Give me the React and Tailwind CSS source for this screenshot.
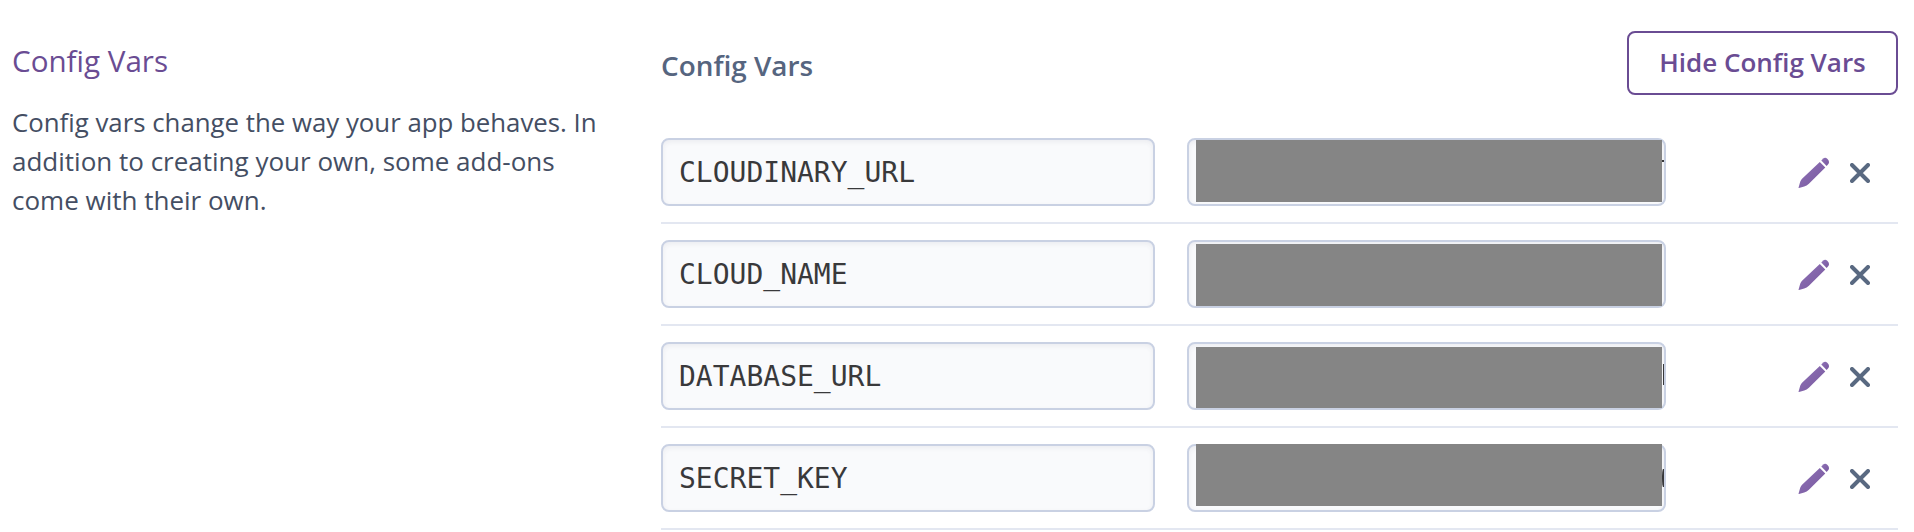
const rows = [
  { name: 'CLOUDINARY_URL', mask: 'mt-0 h-[62px]', sliver: 'mt-[20px] h-[2px] w-[2px]' },
  { name: 'CLOUD_NAME', mask: 'mt-[2px] h-[62px]', sliver: '' },
  { name: 'DATABASE_URL', mask: 'mt-[3px] h-[61px]', sliver: 'mt-[20px] h-[21px] w-px' },
  { name: 'SECRET_KEY', mask: '-mt-[2px] h-[62px]', sliver: 'mt-[23px] h-[18px] w-[2px] rounded-l-[100%]' },
];

function Pencil() {
  return (
    <svg width="32" height="32" viewBox="0 0 32 32" className="block">
      <defs>
        <linearGradient id="pencil" x1="0" y1="0" x2="1" y2="1">
          <stop offset="0" stopColor="#8e72b6" />
          <stop offset="1" stopColor="#79589f" />
        </linearGradient>
      </defs>
      <path fill="url(#pencil)" d="M21.800 4.900 27.300 10.400 10.900 26.800Q8.700 28.900 6.200 29.500L1 31Q.4 31.200.6 30.500L2.200 24.800Q2.900 22.800 4.300 21.400Z" />
      <path fill="url(#pencil)" d="M23.300 3.500 25.200 1.600Q27.200 -.1 29.500 1.900Q32 4.500 30.400 7L28.600 8.900Z" />
    </svg>
  );
}

function Cross() {
  return (
    <svg width="20" height="20" viewBox="0 0 20 20" className="block">
      <path d="M2 2 18 18M18 2 2 18" stroke="#596981" strokeWidth="4" strokeLinecap="round" />
    </svg>
  );
}

export default function App() {
  return (
    <main className="flex h-[532px] w-[1914px] overflow-hidden bg-white font-['Open_Sans','Noto_Sans',sans-serif]">
      <aside className="w-[661px] pt-[38px] pl-[12px]">
        <h2 className="text-[29.6px] leading-[46px] whitespace-nowrap text-[#6a4c93]"><span>Config Vars</span></h2>
        <p className="mt-[19px] text-[26px] leading-[39px] whitespace-nowrap text-[#444e63]">
          <span className="text-[25.8px]">Config vars change the way your app behaves. In</span><br />
          <span>addition to creating your own, some add-ons</span><br />
          <span>come with their own.</span>
        </p>
      </aside>
      <section className="w-[1237px]">
        <header className="flex h-[122px] items-start justify-between pt-[31px]">
          <h3 className="mt-[14px] text-[27.9px] leading-[40px] font-semibold text-[#56657f]"><span>Config Vars</span></h3>
          <button className="flex h-[64px] w-[271px] items-start justify-center rounded-[8px] border-2 border-[#6a4c93] text-[26px] leading-[58px] font-semibold whitespace-nowrap text-[#6a4c93]"><span>Hide Config Vars</span></button>
        </header>
        {rows.map((r) => (
          <div key={r.name} className="flex h-[102px] items-center border-b-2 border-[#e3e7f1] py-[16px]">
            <div className="h-[68px] w-[494px] rounded-[8px] border-2 border-[#c9d1e3] bg-[#f9fafc] pl-[16px] font-['DejaVu_Sans_Mono',monospace] text-[28px] leading-[66px] text-[#39393b] shadow-[inset_0_2px_5px_rgba(50,60,90,0.07)]">{r.name}</div>
            <div className="ml-[32px] flex h-[68px] w-[479px] rounded-[8px] border-2 border-[#c9d1e3] bg-[#f9fafc] pl-[7px] shadow-[inset_0_2px_5px_rgba(50,60,90,0.07)]">
              <div className={`w-[466px] bg-[#858585] ${r.mask}`} />
              <div className={`ml-auto bg-[#39393b] ${r.sliver}`} />
            </div>
            <div className="mt-[2px] ml-[132px] flex items-center gap-[20px]"><Pencil /><Cross /></div>
          </div>
        ))}
      </section>
    </main>
  );
}
